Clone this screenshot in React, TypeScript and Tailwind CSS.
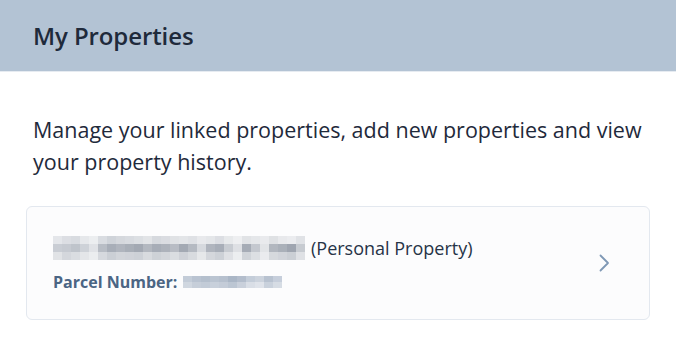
const nameRows: string[][] = [
  ["#e4e6ea", "#dcdee3", "#d8dbe0", "#e6e8eb", "#eceef0", "#d9dce1", "#cfd3d9", "#d5d8dd", "#d8dbe0", "#dcdfe3", "#e2e4e7", "#d6d9de", "#dadce1", "#e0e2e5", "#e3e5e8", "#dfe1e5", "#e8e9ec", "#e4e6e9", "#dcdee3", "#e7e9eb", "#eeeff1", "#e1e3e6", "#e5e7ea", "#e9eaed", "#dfe1e4", "#e8e9ec", "#ebecef", "#e0e2e6"],
  ["#c9cdd4", "#c6cad1", "#bfc4cb", "#ced2d8", "#e0e2e6", "#b8bdc5", "#a8aeb8", "#b0b5be", "#a9afb8", "#a3a9b3", "#b3b8c0", "#a7adb7", "#adb2bb", "#b8bcc4", "#a3a9b3", "#b5bac2", "#d6d9de", "#b0b5be", "#a8aeb8", "#c8ccd2", "#dee0e4", "#a6acb6", "#c4c8cf", "#e2e4e7", "#b2b7bf", "#aab0b9", "#9fa5b0", "#c7cbd1"],
  ["#e1e3e6", "#d4d7dc", "#dadde1", "#e4e6e9", "#ebedef", "#d6d9de", "#cbcfd5", "#d2d5da", "#d0d3d9", "#cdd1d7", "#d8dbdf", "#ced2d7", "#d3d6db", "#dadde1", "#cfd2d8", "#d8dbdf", "#e6e8ea", "#d4d7dc", "#cdd1d7", "#dfe1e5", "#eceef0", "#d0d4d9", "#dcdfe3", "#eaebee", "#d6d9dd", "#d1d4da", "#cbcfd5", "#dfe1e5"],
];

const parcelRows: string[][] = [
  ["#c3ccd8", "#b9c3d1", "#b4bfcd", "#bac4d1", "#b6c0ce", "#aab6c6", "#b3bdcc", "#c4cdd9", "#ccd3dd", "#b8c2d0", "#c6cedb"],
  ["#d0d7e0", "#c6ced9", "#c2cbd7", "#c8d0db", "#c4ccd8", "#bcc6d3", "#c9d0db", "#d9dee6", "#dfe3ea", "#c9d1dc", "#d6dce4"],
];

function Mosaic({ rows, cell, h }: { rows: string[][]; cell: number; h: number }) {
  return (
    <span className="inline-flex flex-col align-middle">
      {rows.map((row, i) => (
        <span key={i} className="flex">
          {row.map((c, j) => (
            <span key={j} style={{ backgroundColor: c, width: cell, height: h }} />
          ))}
        </span>
      ))}
    </span>
  );
}

export default function App() {
  return (
    <div className="w-[676px] h-[338px] bg-white font-['Open_Sans',sans-serif] text-[#1f2a3b] overflow-hidden">
      {/* Header */}
      <div className="h-[72px] bg-[#b3c3d4] border-b border-[#e6ebf1] flex items-center px-[33px]">
        <h1 className="text-[24px] font-semibold text-[#1f2a3b] tracking-[-0.1px]">My Properties</h1>
      </div>

      <div className="px-[26px] pt-[42px]">
        <p className="pl-[7px] text-[21.5px] leading-[32px] text-[#1f2a3b]">
          Manage your linked properties, add new properties and view your property history.
        </p>

        {/* Property card */}
        <div className="mt-[28px] h-[114px] rounded-[6px] border border-[#e3e8ef] bg-[#fcfcfd] flex items-center justify-between pl-[26px] pr-[39px]">
          <div className="flex flex-col gap-[10px] pt-[2px]">
            <div className="flex items-center gap-[6px]">
              <Mosaic rows={nameRows} cell={9} h={8} />
              <span className="text-[18px] leading-[26px] text-[#263347]">(Personal Property)</span>
            </div>
            <div className="flex items-center gap-[6px]">
              <span className="text-[16px] leading-[22px] font-bold text-[#4b6584]">Parcel Number:</span>
              <Mosaic rows={parcelRows} cell={9} h={6} />
            </div>
          </div>
          <svg width="12" height="18" viewBox="0 0 12 18" fill="none" stroke="#7f98b5" strokeWidth="1.8" strokeLinecap="round" strokeLinejoin="round">
            <path d="M2.5 1.5 10 9l-7.5 7.5" />
          </svg>
        </div>
      </div>
    </div>
  );
}
